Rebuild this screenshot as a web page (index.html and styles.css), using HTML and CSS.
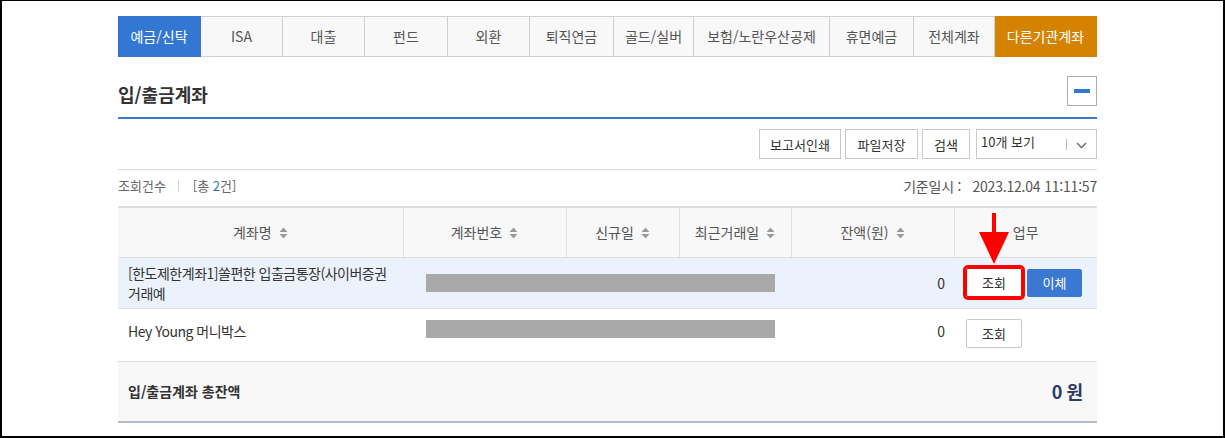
FILE: index.html
```html
<!DOCTYPE html>
<html lang="ko">
<head>
<meta charset="utf-8">
<title>입/출금계좌</title>
<link rel="stylesheet" href="styles.css">
</head>
<body>
<div class="frame">
  <div class="wrap">
    <nav class="tabs">
      <a class="tab active">예금/신탁</a>
      <a class="tab">ISA</a>
      <a class="tab">대출</a>
      <a class="tab">펀드</a>
      <a class="tab">외환</a>
      <a class="tab">퇴직연금</a>
      <a class="tab">골드/실버</a>
      <a class="tab">보험/노란우산공제</a>
      <a class="tab">휴면예금</a>
      <a class="tab">전체계좌</a>
      <a class="tab other">다른기관계좌</a>
    </nav>

    <div class="title-row">
      <h2 class="title">입/출금계좌</h2>
      <button class="collapse" aria-label="접기"><span class="minus"></span></button>
    </div>

    <div class="toolbar">
      <button class="btn w82">보고서인쇄</button>
      <button class="btn w73">파일저장</button>
      <button class="btn w48">검색</button>
      <div class="select">
        <span class="select-text">10개 보기</span>
        <span class="select-div"></span>
        <svg class="chev" width="11" height="7" viewBox="0 0 11 7"><path d="M1 1 L5.5 5.5 L10 1" fill="none" stroke="#777" stroke-width="1.6"/></svg>
      </div>
    </div>

    <div class="info-row">
      <div class="count"><span class="lbl">조회건수</span><span class="bar-sep"></span><span class="total">[총 <em>2</em>건]</span></div>
      <div class="date">기준일시 :&nbsp;&nbsp; 2023.12.04 11:11:57</div>
    </div>

    <table class="grid">
      <colgroup>
        <col class="c1"><col class="c2"><col class="c3"><col class="c4"><col class="c5"><col class="c6">
      </colgroup>
      <thead>
        <tr>
          <th>계좌명<svg class="sort" width="9" height="12" viewBox="0 0 9 12"><path d="M4.5 0.5 L8.5 5 H0.5 Z M4.5 11.5 L8.5 7 H0.5 Z" fill="#9a9a9a"/></svg></th>
          <th>계좌번호<svg class="sort" width="9" height="12" viewBox="0 0 9 12"><path d="M4.5 0.5 L8.5 5 H0.5 Z M4.5 11.5 L8.5 7 H0.5 Z" fill="#9a9a9a"/></svg></th>
          <th>신규일<svg class="sort" width="9" height="12" viewBox="0 0 9 12"><path d="M4.5 0.5 L8.5 5 H0.5 Z M4.5 11.5 L8.5 7 H0.5 Z" fill="#9a9a9a"/></svg></th>
          <th>최근거래일<svg class="sort" width="9" height="12" viewBox="0 0 9 12"><path d="M4.5 0.5 L8.5 5 H0.5 Z M4.5 11.5 L8.5 7 H0.5 Z" fill="#9a9a9a"/></svg></th>
          <th>잔액(원)<svg class="sort" width="9" height="12" viewBox="0 0 9 12"><path d="M4.5 0.5 L8.5 5 H0.5 Z M4.5 11.5 L8.5 7 H0.5 Z" fill="#9a9a9a"/></svg></th>
          <th class="work">업무
            <svg class="arrow" width="32" height="52" viewBox="0 0 32 52"><rect x="14" y="0" width="4" height="22" fill="#f00"/><path d="M1 19 L31 19 L16 51 Z" fill="#f00"/></svg>
          </th>
        </tr>
      </thead>
      <tbody>
        <tr class="row sel">
          <td class="name">[한도제한계좌1]쏠편한 입출금통장(사이버증권 거래예</td>
          <td colspan="3" class="mask-cell"><div class="mask"></div></td>
          <td class="amt">0</td>
          <td class="act"><button class="sbtn hl">조회</button><button class="sbtn blue">이체</button></td>
        </tr>
        <tr class="row r2">
          <td class="name">Hey Young 머니박스</td>
          <td colspan="3" class="mask-cell"><div class="mask"></div></td>
          <td class="amt">0</td>
          <td class="act"><button class="sbtn">조회</button></td>
        </tr>
        <tr class="sum">
          <td colspan="4" class="sum-label">입/출금계좌 총잔액</td>
          <td colspan="2" class="sum-val">0<span class="won">원</span></td>
        </tr>
      </tbody>
    </table>
  </div>
</div>
</body>
</html>
```

FILE: styles.css
```css
* { box-sizing: border-box; }
html, body { margin: 0; padding: 0; background: #fff; }
body {
  font-family: "Noto Sans CJK KR", "Noto Sans", sans-serif;
  color: #333;
  font-size: 14px;
}
.frame {
  width: 1225px;
  height: 438px;
  border-top: 1px solid #000;
  border-left: 2px solid #000;
  border-right: 2px solid #000;
  border-bottom: 2px solid #000;
  padding: 15px 0 0 116px;
  overflow: hidden;
}
.wrap { width: 979px; }

/* tabs */
.tabs {
  display: grid;
  grid-template-columns: 83px 82px 82px 83px 82px 84px 80px 136px 84px 81px 102px;
  height: 41px;
}
.tab {
  display: flex;
  align-items: center;
  justify-content: center;
  background: #f8f8f8;
  border: 1px solid #cfcfcf;
  border-left: none;
  color: #555;
  font-size: 14px;
  white-space: nowrap;
  padding-bottom: 1px;
}
.tab.active {
  background: #3377d3;
  border-color: #3377d3;
  color: #fff;
}
.tab.other {
  background: #d58200;
  border-color: #d58200;
  color: #fff;
}

/* title */
.title-row {
  display: flex;
  justify-content: space-between;
  align-items: flex-end;
  margin-top: 19px;
  padding-bottom: 11px;
  border-bottom: 2px solid #3a78c9;
}
.title {
  margin: 0;
  font-size: 18px;
  font-weight: 700;
  line-height: 24px;
  color: #333;
}
.collapse {
  width: 30px;
  height: 30px;
  border: 1px solid #aaa;
  background: #fff;
  padding: 0;
  display: flex;
  align-items: center;
  justify-content: center;
}
.minus {
  display: block;
  width: 16px;
  height: 4px;
  background: #3477d4;
}

/* toolbar */
.toolbar {
  display: flex;
  justify-content: flex-end;
  gap: 4px;
  margin-top: 10px;
  padding-bottom: 10px;
  border-bottom: 1px solid #dcdcdc;
}
.btn {
  height: 30px;
  border: 1px solid #c8c8c8;
  background: #fff;
  font-family: inherit;
  font-size: 13px;
  color: #333;
  padding: 0;
}
.w82 { width: 82px; }
.w73 { width: 73px; }
.w48 { width: 48px; }
.select {
  width: 121px;
  height: 30px;
  margin-left: 2px;
  border: 1px solid #c8c8c8;
  background: #fff;
  display: flex;
  align-items: flex-start;
  padding-left: 4px;
}
.select-text {
  font-size: 13px;
  line-height: 24px;
  color: #333;
  flex: 1;
}
.select-div {
  width: 1px;
  height: 11px;
  background: #bbb;
  margin-top: 9px;
}
.chev {
  margin: 12px 9px 0 9px;
}

/* info row */
.info-row {
  display: flex;
  justify-content: space-between;
  align-items: flex-start;
  padding-top: 7px;
  height: 36px;
  font-size: 13px;
  line-height: 18px;
  color: #666;
}
.count { display: flex; align-items: center; }
.bar-sep {
  width: 1px;
  height: 12px;
  background: #d5d5d5;
  margin: 0 14px 0 12px;
}
.total em { font-style: normal; color: #3a6fc2; }
.date { color: #555; font-size: 14px; letter-spacing: -0.2px; }

/* table */
.grid {
  width: 979px;
  border-collapse: collapse;
  table-layout: fixed;
}
.c1 { width: 285px; }
.c2 { width: 163px; }
.c3 { width: 113px; }
.c4 { width: 112px; }
.c5 { width: 163px; }
.c6 { width: 143px; }
.grid th {
  height: 50px;
  background: #f8f8f8;
  border-top: 2px solid #dedede;
  border-bottom: 1px solid #dedede;
  border-left: 1px solid #dedede;
  font-weight: 400;
  font-size: 14px;
  color: #555;
  padding: 0;
  white-space: nowrap;
}
.grid th:first-child { border-left: none; }
.sort { margin-left: 7px; vertical-align: -1px; }
.work { position: relative; }
.arrow {
  position: absolute;
  left: 23px;
  top: 5px;
}
.row td {
  border-bottom: 1px solid #dedede;
  padding: 0;
  font-size: 14px;
  color: #333;
  line-height: 20px;
  vertical-align: middle;
}
.row.sel td { background: #ebf2fb; height: 51px; }
.row.r2 td { height: 53px; }
.name {
  padding: 0 0 0 10px !important;
  word-break: keep-all;
  letter-spacing: -0.5px;
}
.row.sel .name { padding-right: 8px !important; }
.r2 .name { padding-bottom: 8px !important; }
.mask-cell { padding-left: 23px !important; }
.mask {
  width: 349px;
  height: 18px;
  background: #a9a9a9;
}
.r2 .mask { margin-top: -12px; }
.amt { text-align: right; padding-right: 9px !important; }
.r2 .amt { padding-bottom: 8px !important; }
.act {
  padding-left: 12px !important;
  white-space: nowrap;
  font-size: 0 !important;
}
.sbtn {
  width: 56px;
  height: 29px;
  border: 1px solid #c8c8c8;
  border-radius: 2px;
  background: #fff;
  font-family: inherit;
  font-size: 13px;
  color: #333;
  padding: 0;
  vertical-align: middle;
}
.sbtn.hl {
  outline: 3px solid #f00;
  outline-offset: 0;
  border-color: #f00;
}
.sbtn.blue {
  width: 55px;
  height: 28px;
  margin-left: 5px;
  background: #3a78d2;
  border-color: #3a78d2;
  color: #fff;
}
.r2 .act .sbtn { margin-top: -2px; }
.sum td {
  height: 61px;
  background: #f8f8f8;
  border-bottom: 2px solid #b4b9d0;
  padding: 0;
}
.sum-label {
  padding-left: 10px !important;
  font-weight: 700;
  font-size: 14px;
  color: #333;
}
.sum-val {
  text-align: right;
  padding-right: 14px !important;
  font-size: 18px;
  font-weight: 700;
  color: #2c3a66;
}
.won { margin-left: 4px; }
```
